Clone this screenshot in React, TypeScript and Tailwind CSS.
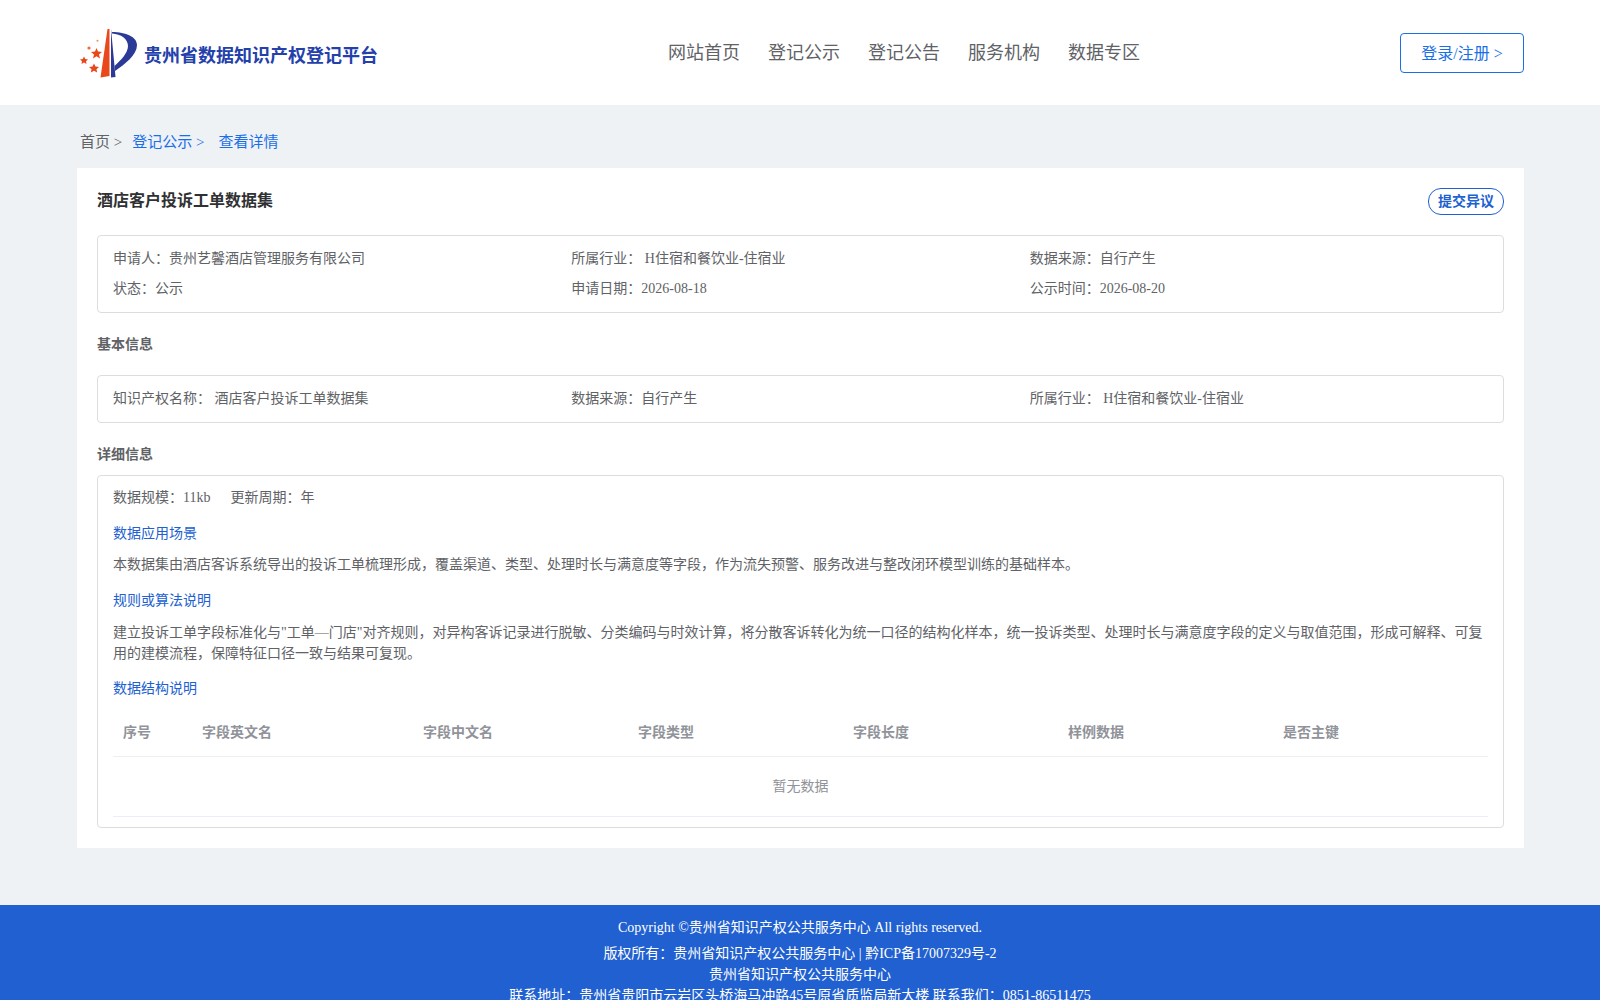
const font = '[font-family:"Liberation_Serif","Noto_Sans_CJK_SC",serif]';

const navItems = ['网站首页', '登记公示', '登记公告', '服务机构', '数据专区'];
const columns = ['序号', '字段英文名', '字段中文名', '字段类型', '字段长度', '样例数据', '是否主键'];

function Logo() {
  return (
    <svg width="58" height="50" viewBox="10 8 58 50" className="shrink-0">
      <polygon points="37.5,9 30.5,57.5 39.5,56 39.5,9" fill="#e8481c" />
      <polygon points="41,9 41,57.5 45.5,57 43,30" fill="#2b3a96" />
      <path d="M42 12 C56 12 67 17 67 25 C67 35 55 44 45 51 L44.5 46 C51 40 58 33 58 26 C58 19 51 14 42 13.5 Z" fill="#2b3a96" />
      <polygon points="26.5,28 28,31.5 32,32 29,34.5 30,38.5 26.5,36.3 23,38.5 24,34.5 21,32 25,31.5" fill="#e8481c" />
      <polygon points="14,36.5 15.3,39 18,39.4 16,41.2 16.5,44 14,42.6 11.5,44 12,41.2 10,39.4 12.8,39" fill="#e8481c" />
      <polygon points="24,43.5 25.5,46.5 29,47 26.5,49.2 27.1,52.5 24,50.8 20.9,52.5 21.5,49.2 19,47 22.5,46.5" fill="#e8481c" />
      <circle cx="19" cy="28" r="1.6" fill="#ef6a40" />
      <circle cx="27.5" cy="20.8" r="1" fill="#ef8a60" />
    </svg>
  );
}

function Header() {
  return (
    <header className="flex h-[105px] items-center bg-white pl-[80px] pr-[76px]">
      <div className="flex w-[588px] items-center gap-[6px]">
        <Logo />
        <span className="pt-[8px] text-[18px] font-bold text-[#2440ab]">贵州省数据知识产权登记平台</span>
      </div>
      <nav className="flex gap-[28px] pt-[1px] text-[18px] text-[#606266]">
        {navItems.map((n) => (
          <span key={n}>{n}</span>
        ))}
      </nav>
      <button className="ml-auto h-10 w-[124px] rounded-[4px] border border-[#1a6fe8] pt-[2px] text-[16px] text-[#1a6fe8]">
        登录/注册 &gt;
      </button>
    </header>
  );
}

function InfoGrid({ rows }: { rows: string[][] }) {
  return (
    <div className="rounded-[4px] border border-[#dddddd] px-[15px] py-[8px]">
      {rows.map((row, i) => (
        <div key={i} className="grid grid-cols-3 py-[5px] leading-[20px]">
          {row.map((c) => (
            <span key={c}>{c}</span>
          ))}
        </div>
      ))}
    </div>
  );
}

function SubTitle({ children }: { children: string }) {
  return <p className="leading-[20px] text-[#2060d0]">{children}</p>;
}

export default function App() {
  return (
    <div className={`min-h-[1000px] bg-[#eff2f5] text-[14px] text-[#606266] ${font}`}>
      <Header />

      <div className="pl-[77px] pr-[76px]">
        <div className="flex h-[63px] items-center pl-[3px] pt-[12px] text-[15px]">
          <span className="mr-[10px]">首页 &gt;</span>
          <span className="mr-[14px] text-[#1a6fe8]">登记公示 &gt;</span>
          <span className="text-[#1a6fe8]">查看详情</span>
        </div>

        <main className="bg-white px-[20px] pb-[20px] pt-[20px]">
          <div className="flex h-[27px] items-center justify-between">
            <h1 className="pb-[2px] text-[16px] font-bold text-[#303133]">酒店客户投诉工单数据集</h1>
            <button className="h-[27px] w-[76px] rounded-[13px] border border-[#2060d0] text-[14px] font-bold text-[#2060d0]">
              提交异议
            </button>
          </div>

          <div className="mt-[20px]">
            <InfoGrid
              rows={[
                ['申请人：贵州艺馨酒店管理服务有限公司', '所属行业： H住宿和餐饮业-住宿业', '数据来源：自行产生'],
                ['状态：公示', '申请日期：2026-08-18', '公示时间：2026-08-20'],
              ]}
            />
          </div>

          <h2 className="mb-[20px] mt-[22px] font-bold leading-[20px]">基本信息</h2>
          <InfoGrid rows={[['知识产权名称： 酒店客户投诉工单数据集', '数据来源：自行产生', '所属行业： H住宿和餐饮业-住宿业']]} />

          <h2 className="mb-[10px] mt-[22px] font-bold leading-[20px]">详细信息</h2>
          <div className="rounded-[4px] border border-[#dddddd] px-[15px] pb-[10px] pt-[12px]">
            <div className="flex gap-[20px] leading-[20px]">
              <span>数据规模：11kb</span>
              <span>更新周期：年</span>
            </div>
            <div className="mt-[16px]">
              <SubTitle>数据应用场景</SubTitle>
            </div>
            <p className="mt-[11px] leading-[20px]">
              本数据集由酒店客诉系统导出的投诉工单梳理形成，覆盖渠道、类型、处理时长与满意度等字段，作为流失预警、服务改进与整改闭环模型训练的基础样本。
            </p>
            <div className="mt-[16px]">
              <SubTitle>规则或算法说明</SubTitle>
            </div>
            <p className="mt-[11px] leading-[21px]">
              建立投诉工单字段标准化与"工单—门店"对齐规则，对异构客诉记录进行脱敏、分类编码与时效计算，将分散客诉转化为统一口径的结构化样本，统一投诉类型、处理时长与满意度字段的定义与取值范围，形成可解释、可复用的建模流程，保障特征口径一致与结果可复现。
            </p>
            <div className="mt-[15px]">
              <SubTitle>数据结构说明</SubTitle>
            </div>

            <table className="mt-[10px] w-full table-fixed border-collapse">
              <colgroup>
                <col className="w-[79px]" />
                <col className="w-[221px]" />
                <col className="w-[215px]" />
                <col className="w-[215px]" />
                <col className="w-[215px]" />
                <col className="w-[215px]" />
                <col />
              </colgroup>
              <thead>
                <tr className="border-b border-[#ebeef5]">
                  {columns.map((c) => (
                    <th key={c} className="h-[47px] px-[10px] text-left font-bold text-[#909399]">
                      {c}
                    </th>
                  ))}
                </tr>
              </thead>
              <tbody>
                <tr className="border-b border-[#ebeef5]">
                  <td colSpan={7} className="h-[60px] text-center text-[#909399]">
                    暂无数据
                  </td>
                </tr>
              </tbody>
            </table>
          </div>
        </main>
      </div>

      <footer className="mt-[57px] bg-[#2060d0] pb-[12px] pt-[12px] text-center leading-[21px] text-white">
        <p className="mb-[5px]">Copyright ©贵州省知识产权公共服务中心 All rights reserved.</p>
        <p>版权所有：贵州省知识产权公共服务中心 | 黔ICP备17007329号-2</p>
        <p>贵州省知识产权公共服务中心</p>
        <p>联系地址：贵州省贵阳市云岩区头桥海马冲路45号原省质监局新大楼 联系我们：0851-86511475</p>
      </footer>
    </div>
  );
}
